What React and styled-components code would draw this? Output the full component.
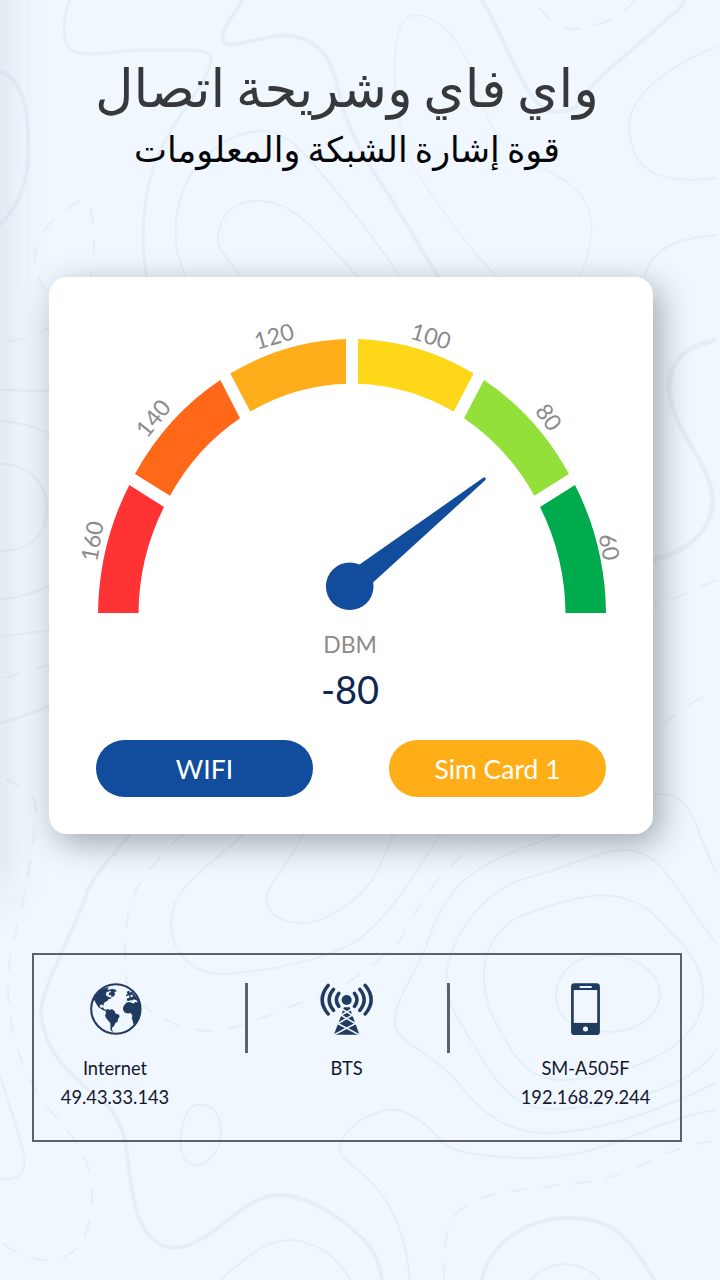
import React from "react"
import styled, { createGlobalStyle } from "styled-components"

const colors = {
  page: "#f0f7ff",
  contour: "#e2eaf5",
  navy: "#213a60",
  ink: "#15172e",
  blue: "#124d9d",
  amber: "#ffae17",
  grey: "#8b8b8b",
  frame: "#606165",
}

const SEGMENTS = [
  {
    color: "#ff3334",
    d: "M98 613 A254 274 0 0 1 129.3 485 L164 507 A214 229 0 0 0 138.5 613Z",
  },
  {
    color: "#ff6719",
    d: "M135 474 A254 274 0 0 1 220.3 380 L240 418.3 A214 229 0 0 0 170 495.8Z",
  },
  {
    color: "#ffae1b",
    d: "M230.3 373.5 A254 274 0 0 1 346 339 L346 383.7 A214 229 0 0 0 250.3 411.6Z",
  },
  {
    color: "#ffd719",
    d: "M358 339 A254 274 0 0 1 473.7 373.5 L453.7 411.6 A214 229 0 0 0 358 383.7Z",
  },
  {
    color: "#94e03a",
    d: "M484 380 A254 274 0 0 1 569 474 L534.3 495.8 A214 229 0 0 0 464 418.3Z",
  },
  {
    color: "#00ab4e",
    d: "M575 485 A254 274 0 0 1 606 613 L565.5 613 A214 229 0 0 0 540 507Z",
  },
]

const TICKS = [
  { value: 160, x: 92, y: 541, angle: -80 },
  { value: 140, x: 153, y: 418, angle: -51 },
  { value: 120, x: 274, y: 336, angle: -16 },
  { value: 100, x: 431, y: 336, angle: 17 },
  { value: 80, x: 549, y: 417, angle: 54 },
  { value: 60, x: 609.5, y: 547, angle: 79 },
]

const CONTOURS = [
  { w: 3, d: "M70 0C62 20 60 50 78 53C105 57 120 48 160 50C190 50 212 48 211 60C210 85 160 130 150 180C140 220 142 255 148 285" },
  { w: 4, d: "M243 0C232 18 218 32 224 43C235 50 270 32 292 36C330 42 335 75 342 105C352 140 375 175 392 200L440 280" },
  { w: 1.5, d: "M497 277C470 250 425 190 405 150C393 100 386 15 416 15C450 17 470 60 478 90C490 130 500 150 550 172C585 190 596 210 590 245C588 260 580 275 578 280" },
  { w: 2, d: "M186 277C165 235 175 175 220 145C260 120 285 130 310 160C335 190 370 230 400 277" },
  { w: 2, d: "M241 277C225 255 216 247 218 235C222 200 260 192 290 210C315 225 340 260 358 277" },
  { w: 4, d: "M482 0C500 30 510 60 525 85C540 115 555 115 575 108C590 80 640 45 660 25C675 12 683 8 684 0" },
  { w: 2, d: "M716 47C670 65 630 95 629 125C630 160 645 187 716 178" },
  { w: 2, dash: true, d: "M539 8C555 25 560 30 575 29C600 27 625 15 635 0" },
  { w: 2, d: "M716 235C680 238 650 248 645 277" },
  { w: 4, d: "M0 72C25 78 30 120 28 160C26 190 15 210 0 225" },
  { w: 2, dash: true, d: "M80 201C50 215 33 240 35 265C38 285 50 300 70 300" },
  { w: 2, dash: true, d: "M90 208C96 230 95 255 90 280" },
  { w: 2, dash: true, d: "M8 341C25 340 37 335 49 328" },
  { w: 2, d: "M0 390L49 391" },
  { w: 2, d: "M0 421C15 422 30 425 49 433" },
  { w: 2, d: "M0 464C30 463 47 485 47 510C46 535 30 552 0 551" },
  { w: 2, d: "M0 599C20 598 35 593 49 586" },
  { w: 1.5, d: "M0 637L49 630" },
  { w: 2, dash: true, d: "M4 678L49 665" },
  { w: 3, d: "M0 723C20 719 30 712 49 707" },
  { w: 2, dash: true, d: "M6 779C30 790 38 800 36 815C33 850 25 900 12 945C3 990 10 1040 30 1080C50 1120 90 1140 92 1190C93 1230 80 1262 45 1260C20 1258 5 1245 0 1242" },
  { w: 4, d: "M130 834C110 860 97 870 88 890C75 930 45 980 41 1010C42 1050 70 1075 95 1095C130 1120 125 1150 132 1190C138 1230 155 1248 175 1248C215 1245 240 1195 280 1195C310 1196 345 1220 362 1238C375 1250 380 1265 382 1280" },
  { w: 2, dash: true, d: "M183 834C150 865 128 890 126 930C124 960 124 975 130 998C160 1015 170 1028 205 1031C240 1032 270 1012 310 1000C345 990 380 960 400 940C420 905 430 880 480 840" },
  { w: 2, d: "M243 834C220 860 175 880 171 920C170 950 190 975 225 974C265 972 330 960 362 937C400 905 415 870 441 834" },
  { w: 2, d: "M303 834C285 870 262 890 267 905C275 925 310 928 330 915C370 895 380 870 393 834" },
  { w: 2, d: "M560 835C480 860 450 880 430 935C420 970 392 1000 395 1025C400 1045 430 1050 460 1085C490 1125 520 1133 550 1133C600 1132 660 1110 716 1083" },
  { w: 2, d: "M716 943C680 900 665 850 625 850C600 850 560 870 530 877C480 890 455 935 448 965C440 1000 460 1020 480 1055C500 1090 520 1110 555 1109C610 1108 690 1090 716 1050" },
  { w: 2, d: "M668 930C650 905 625 895 600 895C570 897 520 915 510 922C480 945 480 980 490 1010C505 1040 520 1080 560 1080C610 1080 698 1055 703 1000C705 970 690 950 668 930" },
  { w: 2, d: "M600 955C640 955 661 975 660 995C658 1020 630 1035 600 1031C570 1030 556 1015 556 995C556 975 575 955 600 955" },
  { w: 2, d: "M653 794C680 792 690 805 700 835L716 873" },
  { w: 5, d: "M716 340C685 347 670 360 669 385C670 430 710 460 713 500C712 530 690 550 653 560" },
  { w: 2, dash: true, d: "M716 580L653 608" },
  { w: 2, dash: true, d: "M703 697C680 708 665 725 653 730" },
  { w: 2, d: "M716 1110C650 1120 610 1158 530 1158C480 1158 445 1150 440 1140C415 1110 395 1108 385 1110C355 1118 340 1135 340 1150C342 1170 400 1175 410 1280" },
  { w: 2, dash: true, d: "M712 1141C650 1150 640 1180 560 1185C510 1192 480 1190 455 1215C443 1235 443 1260 444 1280" },
  { w: 4, d: "M482 1280C490 1240 530 1218 570 1218C620 1217 635 1250 655 1280" },
  { w: 2, d: "M530 1280C550 1258 580 1260 600 1280" },
  { w: 2, d: "M196 1105C212 1102 222 1115 221 1135C220 1152 206 1168 193 1165C182 1162 178 1148 182 1128C184 1115 190 1106 196 1105" },
  { w: 2, d: "M220 1280C250 1255 265 1240 290 1240C320 1242 340 1260 350 1280" },
  { w: 2, d: "M0 1075C10 1110 22 1140 25 1160C24 1178 15 1180 0 1179" },
]

const ContourMap = () => (
  <Backdrop viewBox='0 0 720 1280' aria-hidden='true'>
    <defs>
      <filter id='edge-blur' x='-300%' y='-20%' width='700%' height='140%'>
        <feGaussianBlur stdDeviation='20' />
      </filter>
    </defs>
    <g fill='none' stroke={colors.contour} strokeOpacity='0.72'>
      {CONTOURS.map((line) => (
        <path
          key={line.d}
          d={line.d}
          strokeWidth={line.w}
          strokeDasharray={line.dash ? "17 15" : undefined}
        />
      ))}
    </g>
    {/* soft shadow along the left edge */}
    <rect
      x='-44'
      y='-60'
      width='50'
      height='955'
      fill='#55555f'
      fillOpacity='0.13'
      filter='url(#edge-blur)'
    />
  </Backdrop>
)

const Gauge = () => (
  <GaugeSvg viewBox='49 277 604 346'>
    {SEGMENTS.map((segment) => (
      <path key={segment.color} d={segment.d} fill={segment.color} />
    ))}
    {TICKS.map((tick) => (
      <TickLabel
        key={tick.value}
        transform={`translate(${tick.x} ${tick.y}) rotate(${tick.angle})`}
        y='8.5'>
        {tick.value}
      </TickLabel>
    ))}
    <g fill={colors.blue}>
      <circle cx='349.7' cy='586.3' r='23.8' />
      <path d='M356 567 L483.5 477.6 Q486.5 477 485.5 480 L373 582.5 L350 590Z' />
    </g>
  </GaugeSvg>
)

const GlobeIcon = () => (
  <IconSvg viewBox='30 38 156 154'>
    <circle cx='109' cy='115' r='73' fill='none' stroke={colors.navy} strokeWidth='6' />
    <g fill={colors.navy}>
      <path d='M42 96C45 76 58 59 77 53L88 50L84 57L92 58L97 55L109 58L111 64L104 64L107 70L103 78L96 79L93 73L87 74L90 66L96 65L93 62L82 65L79 72L83 77L90 80L97 81L93 85L87 86L84 91L77 94L72 101L75 107L70 103L64 102L61 106L65 112L71 110L74 115L81 118L79 121L70 118L57 109L50 98L45 88Z' />
      <path d='M78 120L83 115L91 117L98 116L105 121L108 128L119 132L120 138L116 144L114 153L107 157L104 165L98 170L98 178L102 182L97 182L93 176L93 158L87 150L80 142L77 134L80 127Z' />
      <path d='M141 64L149 61L151 67L157 63L161 70C171 80 180 93 183 109C185 127 178 148 166 164L160 157L159 149L156 143L158 135L153 127L145 128L136 126L131 119L130 112L133 105L141 96L151 94L158 98L165 98L164 92L158 91L152 88L148 91L141 90L142 84L150 81L147 74L140 78L139 73L144 71Z' />
    </g>
    <path fill={colors.page} d='M155 91l7 -5l9 4l3 6l-8 -2zM151 75l6 -3l3 5l-6 3z' />
  </IconSvg>
)

const TowerIcon = () => (
  <IconSvg viewBox='31 38 156 156'>
    <g fill={colors.navy}>
      <circle cx='109.500' cy='89' r='15' />
      <path d='M101 111H119L124 128L148 193H71L96 128Z' />
    </g>
    <g fill='none' stroke={colors.page} strokeWidth='4.500'>
      <path d='M94 115L130 137M126 115L90 137' />
      <path d='M90 133L138 161M129 133L81 161' />
      <path d='M80 158L152 196M139 158L67 196' />
    </g>
    <g fill='none' stroke={colors.navy} strokeWidth='10.500' strokeLinecap='round'>
      <path d='M54 45Q18 88 54 131M70 57Q44 88 70 120M86 69Q71 88 86 108' />
      <path d='M165 45Q201 88 165 131M149 57Q175 88 149 120M133 69Q148 88 133 108' />
    </g>
  </IconSvg>
)

const PhoneIcon = () => (
  <IconSvg viewBox='32 38 156 155'>
    <rect x='67' y='39' width='86' height='154' rx='10' fill={colors.navy} />
    <rect x='75' y='59' width='70' height='98' fill={colors.page} />
    <rect x='92' y='47' width='37' height='6' rx='2' fill={colors.page} />
    <circle cx='110' cy='175' r='7.500' fill={colors.page} />
  </IconSvg>
)

export default function App() {
  return (
    <Screen>
      <GlobalStyle />
      <ContourMap />
      <Content>
        <Header>
          <Title>واي فاي وشريحة اتصال</Title>
          <Subtitle>قوة إشارة الشبكة والمعلومات</Subtitle>
        </Header>

        <SignalCard>
          <Gauge />
          <Unit>DBM</Unit>
          <Reading>-80</Reading>
          <Actions>
            <PillButton $color={colors.blue}>WIFI</PillButton>
            <PillButton $color={colors.amber}>Sim Card 1</PillButton>
          </Actions>
        </SignalCard>

        <InfoPanel>
          <InfoItem>
            <GlobeIcon />
            <InfoText>Internet</InfoText>
            <InfoText>49.43.33.143</InfoText>
          </InfoItem>
          <Divider />
          <InfoItem>
            <TowerIcon />
            <InfoText>BTS</InfoText>
          </InfoItem>
          <Divider />
          <InfoItem>
            <PhoneIcon />
            <InfoText>SM-A505F</InfoText>
            <InfoText>192.168.29.244</InfoText>
          </InfoItem>
        </InfoPanel>
      </Content>
    </Screen>
  )
}

const GlobalStyle = createGlobalStyle`
  * {
    box-sizing: border-box;
  }
  body {
    margin: 0;
    font-family: Lato, "Liberation Sans", sans-serif;
  }
`

const Screen = styled.main`
  display: grid;
  width: 720px;
  height: 1280px;
  overflow: hidden;
  background: ${colors.page};
`

const Backdrop = styled.svg`
  grid-area: 1 / 1;
  width: 720px;
  height: 1280px;
`

const Content = styled.div`
  grid-area: 1 / 1;
  z-index: 1;
  display: flex;
  flex-direction: column;
`

const Header = styled.header`
  direction: rtl;
  display: flex;
  flex-direction: column;
  align-items: center;
  width: 694px;
  height: 277px;
  padding-top: 52px;
`

const Title = styled.h1`
  margin: 0;
  font-family: "Noto Sans", "DejaVu Sans", sans-serif;
  font-size: 53px;
  font-weight: 400;
  line-height: 69px;
  word-spacing: -3px;
  white-space: nowrap;
  color: #373839;
`

const Subtitle = styled.h2`
  margin: 0;
  font-family: "Noto Sans", "DejaVu Sans", sans-serif;
  font-size: 35px;
  font-weight: 400;
  line-height: 56px;
  word-spacing: -2px;
  white-space: nowrap;
  color: #050507;
`

const SignalCard = styled.section`
  display: flex;
  flex-direction: column;
  align-items: center;
  width: 604px;
  height: 557px;
  margin-left: 49px;
  border-radius: 18px;
  background: #fff;
  box-shadow: 7px 9px 32px rgba(20, 25, 30, 0.36);
`

const GaugeSvg = styled.svg`
  width: 604px;
  height: 346px;
`

const TickLabel = styled.text`
  font-size: 23px;
  text-anchor: middle;
  fill: ${colors.grey};
`

const Unit = styled.div`
  margin: 7px 2px 0 0;
  font-size: 23px;
  line-height: 28px;
  color: ${colors.grey};
`

const Reading = styled.div`
  margin: 7px 2px 0 0;
  font-size: 38px;
  line-height: 48px;
  color: #102750;
`

const Actions = styled.div`
  display: flex;
  justify-content: space-between;
  width: 510px;
  margin-top: 26.5px;
`

const PillButton = styled.button`
  width: 217px;
  height: 57px;
  padding: 1px 0 0;
  border: none;
  border-radius: 29px;
  background: ${(p) => p.$color};
  color: #fff;
  font-family: inherit;
  font-size: 26.5px;
`

const InfoPanel = styled.section`
  display: grid;
  grid-template-columns: 162px 101px 99px 104px 171px;
  align-items: start;
  width: 650px;
  height: 189px;
  margin: 119px 0 0 32px;
  padding-top: 28px;
  border: 2px solid ${colors.frame};
`

const InfoItem = styled.div`
  display: flex;
  flex-direction: column;
  align-items: center;
`

const IconSvg = styled.svg`
  width: 53px;
  height: 52px;
  margin-bottom: 19px;
`

const InfoText = styled.span`
  font-size: 18.3px;
  line-height: 28.5px;
  white-space: nowrap;
  color: ${colors.ink};
`

const Divider = styled.div`
  justify-self: center;
  width: 3px;
  height: 70px;
  background: ${colors.frame};
`
